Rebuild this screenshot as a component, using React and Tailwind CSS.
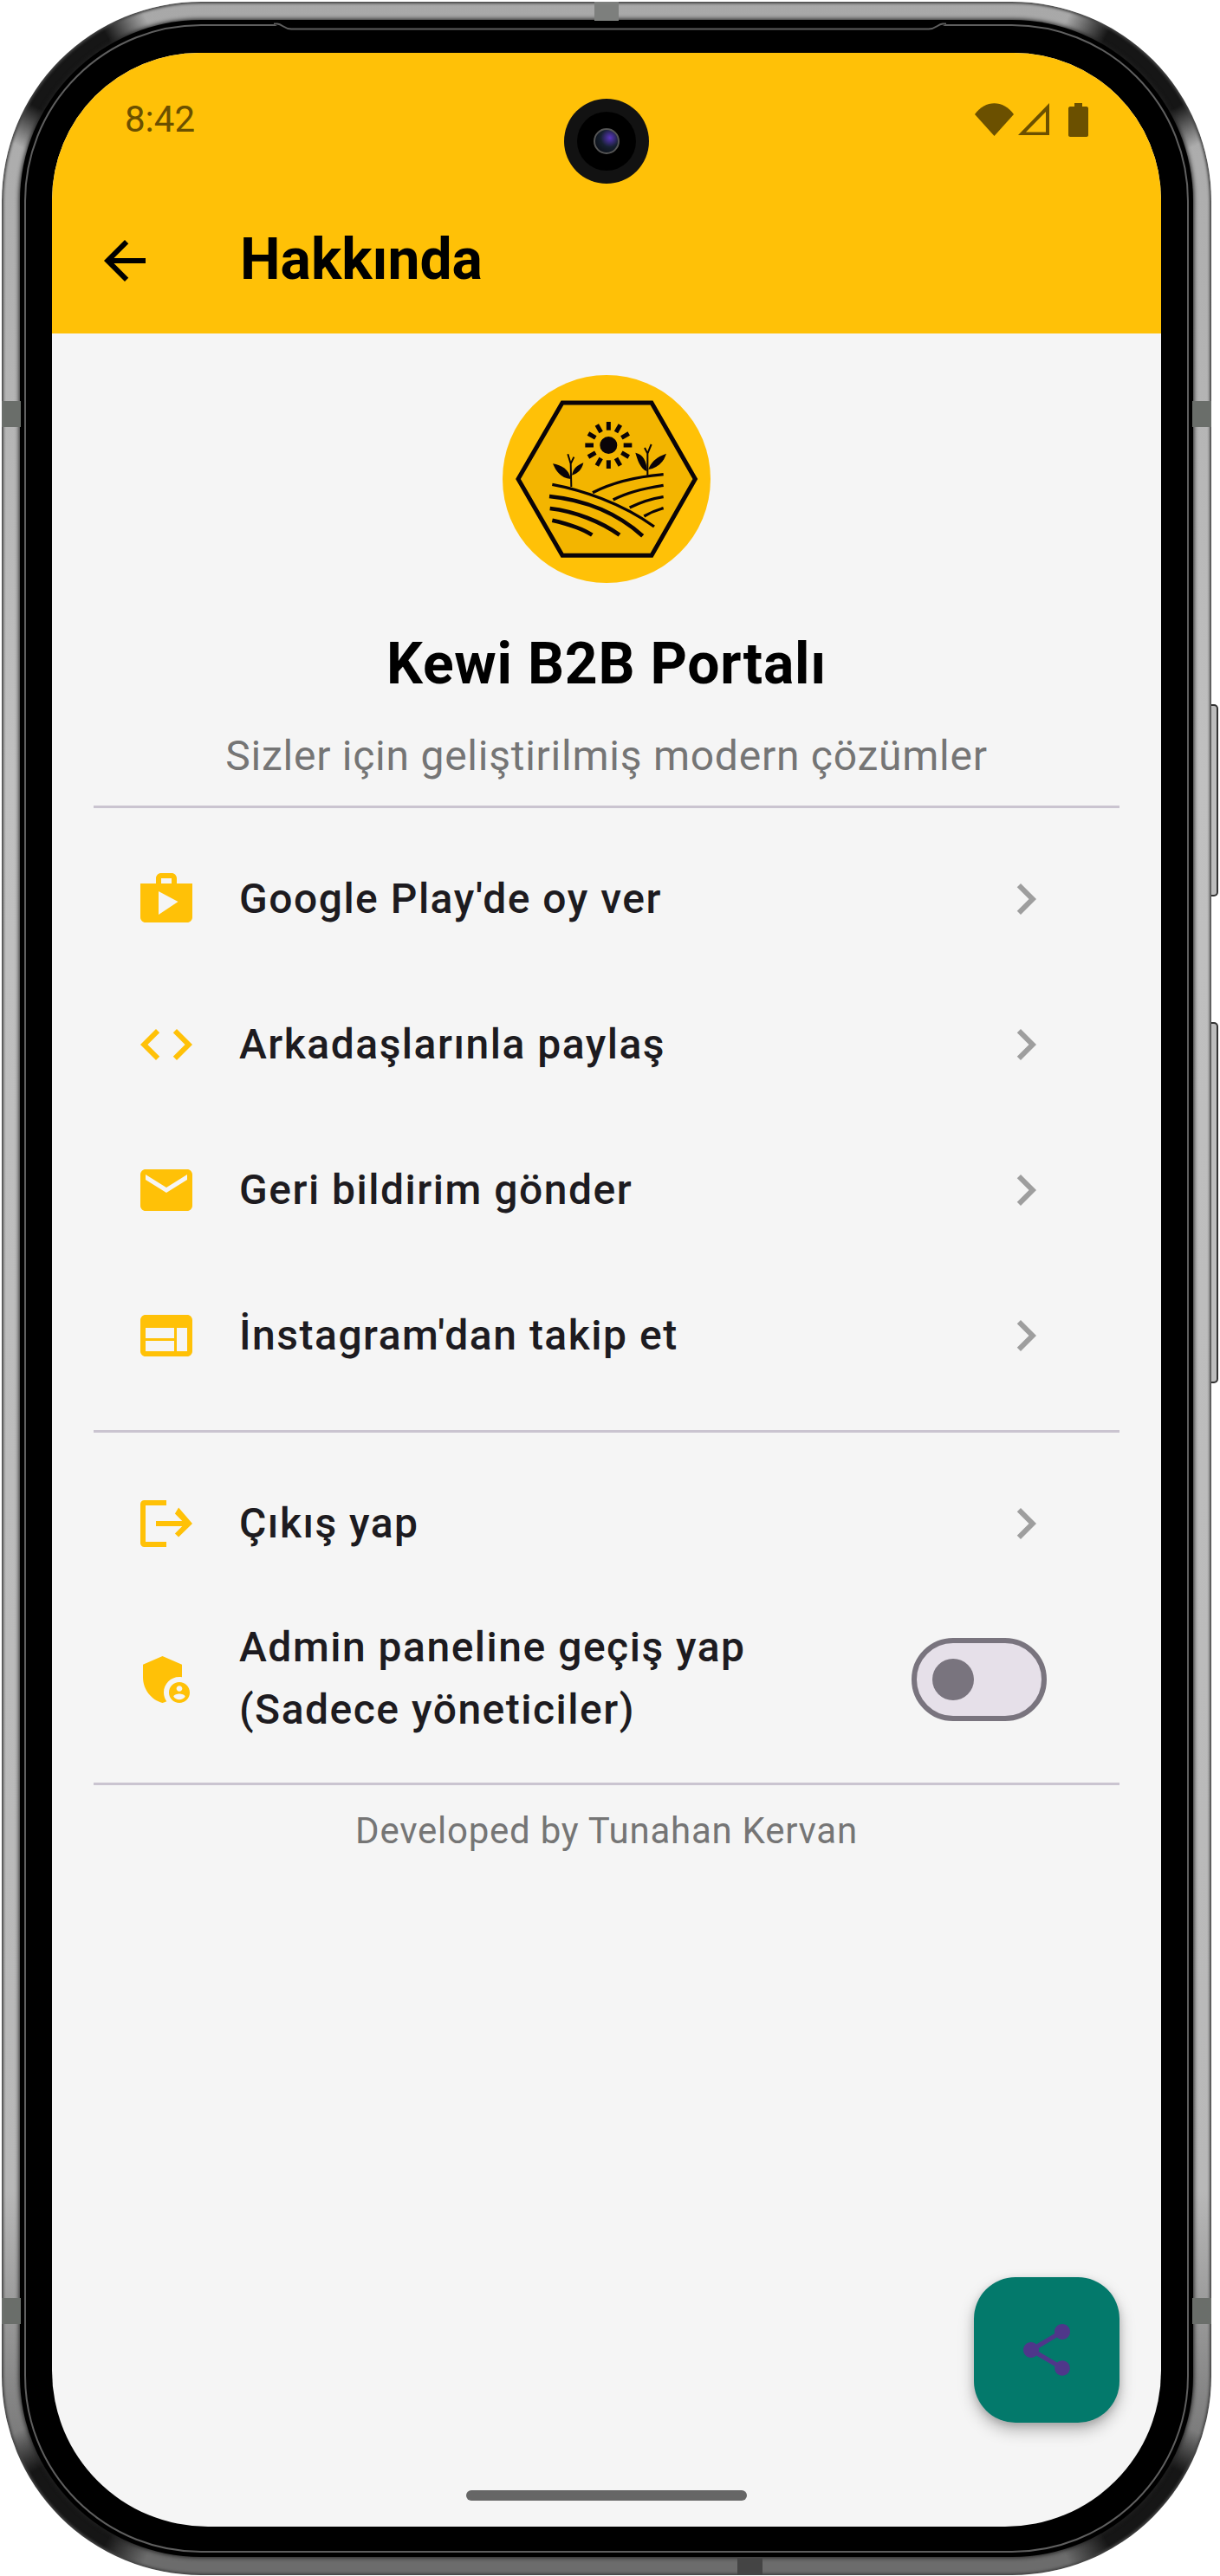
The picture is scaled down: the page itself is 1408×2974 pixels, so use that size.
import React from "react";
import {
  MdAdminPanelSettings,
  MdArrowBack,
  MdChevronRight,
  MdCode,
  MdEmail,
  MdShare,
  MdShop,
  MdWeb,
} from "react-icons/md";

const menuItems = [
  { label: "Google Play'de oy ver", Icon: MdShop },
  { label: "Arkadaşlarınla paylaş", Icon: MdCode },
  { label: "Geri bildirim gönder", Icon: MdEmail },
  { label: "İnstagram'dan takip et", Icon: MdWeb },
];

const ExitIcon = ({ className }) => (
  <svg viewBox="0 0 24 24" className={className} fill="currentColor">
    <path d="M3.5 3H12v2H4v14h8v2H3.500C2.670 21 2 20.330 2 19.500v-15C2 3.670 2.670 3 3.500 3z" />
    <path d="M16.700 5.800 22 12l-5.300 5.200-1.400-1.400 2.800-2.800H8v-2h10.100l-2.800-2.800z" />
  </svg>
);

const FarmLogo = () => (
  <svg viewBox="60 38 720 720" className="block w-[240px] h-[240px]">
    <circle cx="420" cy="398" r="360" fill="#FFC107" />
    <path d="M114 398 267 134H576L727 398 576 663H267Z" fill="#F3B500" stroke="#0a0408" strokeWidth="15" />
    <circle cx="427" cy="281" r="30" fill="#0a0408" />
    {[0, 1, 2, 3, 4, 5, 6, 7, 8, 9, 10, 11].map((i) => (
      <line
        key={i}
        x1="427"
        y1="200"
        x2="427"
        y2="229"
        stroke="#0a0408"
        strokeWidth="15"
        transform={`rotate(${i * 30} 427 281)`}
      />
    ))}
    <g fill="#0a0408">
      <path d="M296 398C260 395 245 370 234 345 265 350 290 365 296 398Z" />
      <path d="M300 385C305 360 320 350 340 342 335 365 320 380 300 385Z" />
      <path d="M560 372C535 360 527 330 520 307 545 312 560 335 560 372Z" />
      <path d="M565 365C575 335 600 320 627 310 618 340 595 360 565 365Z" />
    </g>
    <g fill="none" stroke="#0a0408" strokeWidth="6">
      <path d="M298 425 296 345 286 312M296 345 307 322" />
      <path d="M562 385V310L552 290M562 310 575 278" />
    </g>
    <g fill="none" stroke="#0a0408" strokeWidth="10">
      <path d="M232 417C330 435 470 480 585 563" />
      <path d="M372 445C440 410 520 390 617 382" />
      <path d="M443 470C490 445 550 430 617 420" />
      <path d="M500 497C540 478 580 465 617 460" />
      <path d="M550 527C570 515 595 505 617 499" />
    </g>
    <g fill="none" stroke="#0a0408" strokeWidth="14">
      <path d="M222 458C340 470 450 510 545 595" />
      <path d="M224 500C310 510 400 545 465 592" />
      <path d="M232 541C280 552 330 565 370 592" />
    </g>
  </svg>
);

const StatusIcons = () => (
  <div className="flex items-start text-[#6B5000]">
    <svg viewBox="0 0 45 38" className="w-[45px] h-[38px]" fill="currentColor">
      <path d="M0 13C12-4 33-4 45 13L22.500 38Z" />
    </svg>
    <svg viewBox="0 0 36 37" className="w-[36px] h-[37px] ml-[5px]" fill="currentColor" fillRule="evenodd">
      <path d="M36 0V37H0ZM32 10 9 33.500H32Z" />
    </svg>
    <svg viewBox="0 0 23 39" className="w-[23px] h-[39px] ml-[22px]" fill="currentColor">
      <path d="M7 0h9v4h5c1 0 2 1 2 2v31c0 1-1 2-2 2H2c-1 0-2-1-2-2V6c0-1 1-2 2-2h5z" />
    </svg>
  </div>
);

const Camera = () => (
  <div className="absolute left-[591px] top-[53px] w-[98px] h-[98px] rounded-full bg-[#121212] flex items-center justify-center">
    <div className="w-[68px] h-[68px] rounded-full bg-black flex items-center justify-center">
      <div className="w-[30px] h-[30px] rounded-full border-2 border-[#555] bg-[radial-gradient(circle_at_65%_35%,#5a35c0_0%,#16202f_45%,#08080c_100%)]" />
    </div>
  </div>
);

const MenuRow = ({ label, Icon }) => (
  <div className="flex items-center h-[168px] pl-[48px] pr-[72px]">
    <Icon className="w-[72px] h-[72px] text-[#FFC107] shrink-0" />
    <span className="ml-[48px] flex-1 text-[48px] font-medium tracking-[1.5px] text-[#1D1B20]">{label}</span>
    <MdChevronRight className="w-[72px] h-[72px] text-[#9E9E9E] shrink-0" />
  </div>
);

const Divider = () => <div className="h-[3px] bg-[#CAC4D0]" />;

const Screen = () => (
  <div className="relative w-[1280px] h-[2856px] rounded-t-[170px] rounded-b-[180px] overflow-hidden bg-[#F5F5F5] font-[Roboto,sans-serif]">
    <header className="bg-[#FFC107] h-[324px]">
      <div className="flex items-start justify-between h-[155px] pt-[58px] pl-[84px] pr-[84px]">
        <span className="text-[42px] leading-[38px] text-[#6B5000]">8:42</span>
        <StatusIcons />
      </div>
      <div className="flex items-center h-[169px] pl-[48px]">
        <MdArrowBack className="w-[72px] h-[72px] text-black" />
        <h1 className="ml-[97px] -mt-[3px] text-[66px] font-bold text-black">Hakkında</h1>
      </div>
    </header>
    <Camera />

    <main className="px-[48px]">
      <div className="flex flex-col items-center pt-[48px]">
        <FarmLogo />
        <h2 className="mt-[52px] text-[66px] leading-[84px] font-bold tracking-[0.75px] text-black">Kewi B2B Portalı</h2>
        <p className="mt-[32px] text-[48px] leading-[64px] tracking-[0.75px] text-[#757575]">
          Sizler için geliştirilmiş modern çözümler
        </p>
      </div>
      <div className="mt-[25px]">
        <Divider />
      </div>

      <div className="pt-[21px] pb-[25px]">
        {menuItems.map((item) => (
          <MenuRow key={item.label} label={item.label} Icon={item.Icon} />
        ))}
      </div>
      <Divider />

      <div className="pt-[21px]">
        <MenuRow label="Çıkış yap" Icon={ExitIcon} />
        <div className="flex items-center pl-[48px] pr-[84px] h-[192px]">
          <MdAdminPanelSettings className="w-[72px] h-[72px] text-[#FFC107] shrink-0" />
          <span className="ml-[48px] -mt-[2px] flex-1 text-[48px] leading-[72px] font-medium tracking-[1.5px] text-[#1D1B20]">
            Admin paneline geçiş yap
            <br />
            (Sadece yöneticiler)
          </span>
          <div className="flex items-center w-[156px] h-[96px] rounded-full bg-[#E6E0E9] border-[6px] border-[#79747E] pl-[18px]">
            <div className="w-[48px] h-[48px] rounded-full bg-[#79747E]" />
          </div>
        </div>
      </div>
      <div className="mt-[23px]">
        <Divider />
      </div>
      <p className="mt-[25px] text-center text-[42px] leading-[56px] tracking-[0.75px] text-[#757575]">
        Developed by Tunahan Kervan
      </p>
    </main>

    <button className="absolute left-[1064px] top-[2568px] flex items-center justify-center w-[168px] h-[168px] rounded-[48px] bg-[#03796B] shadow-[0_9px_18px_rgba(0,0,0,0.25),0_3px_9px_rgba(0,0,0,0.15)]">
      <MdShare className="w-[72px] h-[72px] text-[#4F378A]" />
    </button>
    <div className="absolute left-[478px] bottom-[30px] w-[324px] h-[12px] rounded-full bg-[#666666]" />
  </div>
);

export default function App() {
  return (
    <div className="relative w-[1408px] h-[2974px] bg-white overflow-hidden">
      {/* side buttons */}
      <div className="absolute left-[1396px] top-[813px] w-[10px] h-[222px] rounded-r-[5px] bg-[#bdbdbd] border-y-2 border-r-2 border-[#333]" />
      <div className="absolute left-[1396px] top-[1180px] w-[10px] h-[417px] rounded-r-[5px] bg-[#bdbdbd] border-y-2 border-r-2 border-[#333]" />

      {/* metal band */}
      <div className="relative ml-[2px] mt-[2px] w-[1396px] h-[2971px] rounded-[230px] p-[21px] shadow-[inset_0_0_3px_2px_#444] bg-[radial-gradient(circle_110px_at_left_68px_top_68px,#161616_55%,transparent_100%),radial-gradient(circle_110px_at_right_68px_top_68px,#161616_55%,transparent_100%),radial-gradient(circle_110px_at_left_68px_bottom_68px,#161616_55%,transparent_100%),radial-gradient(circle_110px_at_right_68px_bottom_68px,#161616_55%,transparent_100%),linear-gradient(to_bottom,#a8a8a8_0%,#c0c0c0_30%,#b8b8b8_85%,#6c6c6c_97%,#6c6c6c_100%)]">
        <div className="rounded-[209px] bg-black shadow-[0_0_5px_1px_#222] p-[5px]">
          <div className="rounded-[204px] border-[2px] border-[#5f5f5f] bg-black pt-[31px] pb-[28px] pl-[30px] pr-[30px]">
            <Screen />
          </div>
        </div>
      </div>

      {/* antenna bands and the step in the inner line */}
      <div className="absolute left-[686px] top-[2px] w-[28px] h-[22px] bg-[#7d7f7d]" />
      <div className="absolute left-[851px] top-[2952px] w-[29px] h-[21px] bg-[#444444]" />
      <div className="absolute left-[2px] top-[463px] w-[22px] h-[30px] bg-[#6a6e6a]" />
      <div className="absolute left-[2px] top-[2653px] w-[22px] h-[30px] bg-[#6a6e6a]" />
      <div className="absolute left-[1376px] top-[463px] w-[22px] h-[30px] bg-[#6a6e6a]" />
      <div className="absolute left-[1376px] top-[2653px] w-[22px] h-[30px] bg-[#6a6e6a]" />
      <svg viewBox="0 0 1408 40" className="absolute left-0 top-0 w-[1408px] h-[40px]" fill="none">
        <path d="M316 25H1092V28L1076 36H332L316 28Z" fill="#000" />
        <path d="M316 27.500H320C326 28 328 33.500 336 33.500H1072C1080 33.500 1082 28 1088 27.500H1092" stroke="#5f5f5f" strokeWidth="2" />
      </svg>
    </div>
  );
}
